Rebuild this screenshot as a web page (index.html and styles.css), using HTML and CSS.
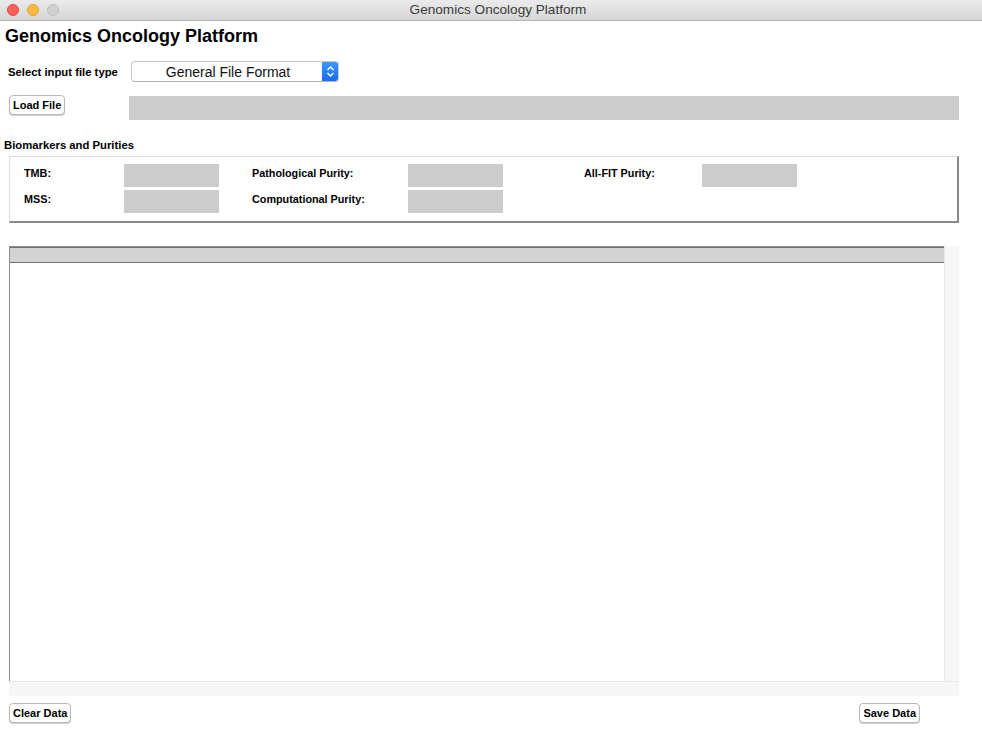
FILE: index.html
```html
<!DOCTYPE html>
<html>
<head>
<meta charset="utf-8">
<link rel="stylesheet" href="styles.css">
</head>
<body>
<div class="titlebar">
  <div class="lights">
    <span class="light red"></span>
    <span class="light yellow"></span>
    <span class="light gray"></span>
  </div>
  <div class="wintitle">Genomics Oncology Platform</div>
</div>
<div class="app">
  <h1 class="heading">Genomics Oncology Platform</h1>
  <div class="row-select">
    <span class="label">Select input file type</span>
    <div class="select">
      <span class="select-text">General File Format</span>
      <span class="stepper">
        <svg width="9" height="13" viewBox="0 0 9 13"><path d="M1.5 5 L4.5 2 L7.5 5 M1.5 8 L4.5 11 L7.5 8" fill="none" stroke="#fff" stroke-width="1.4"/></svg>
      </span>
    </div>
  </div>
  <div class="row-load">
    <button class="btn">Load File</button>
    <div class="field path"></div>
  </div>
  <div class="section-title">Biomarkers and Purities</div>
  <div class="panel">
    <div class="col c1">
      <div class="pair"><span class="plabel">TMB:</span><div class="field box"></div></div>
      <div class="pair"><span class="plabel">MSS:</span><div class="field box"></div></div>
    </div>
    <div class="col c2">
      <div class="pair"><span class="plabel">Pathological Purity:</span><div class="field box"></div></div>
      <div class="pair"><span class="plabel">Computational Purity:</span><div class="field box"></div></div>
    </div>
    <div class="col c3">
      <div class="pair"><span class="plabel">All-FIT Purity:</span><div class="field box"></div></div>
    </div>
  </div>
  <div class="table-wrap">
    <div class="table-main">
      <div class="table">
        <div class="thead"></div>
      </div>
      <div class="vscroll"></div>
    </div>
    <div class="hscroll"></div>
  </div>
  <div class="bottom">
    <button class="btn">Clear Data</button>
    <button class="btn save">Save Data</button>
  </div>
</div>
</body>
</html>
```
FILE: styles.css
```css
html, body {
  margin: 0;
  padding: 0;
  background: #ffffff;
  font-family: "Liberation Sans", Arial, sans-serif;
  width: 982px;
  height: 735px;
  overflow: hidden;
}
.titlebar {
  height: 21px;
  box-sizing: border-box;
  background: linear-gradient(#ebebeb, #d6d6d6);
  border-bottom: 1px solid #b4b4b4;
  display: flex;
  align-items: center;
  position: relative;
}
.lights {
  display: flex;
  gap: 8px;
  padding-left: 7px;
}
.light {
  width: 12px;
  height: 12px;
  border-radius: 50%;
  box-sizing: border-box;
}
.red { background: #fc605c; border: 1px solid #de4a45; }
.yellow { background: #fdbc40; border: 1px solid #de9f34; }
.gray { background: #d0d0d0; border: 1px solid #bdbdbd; }
.wintitle {
  position: absolute;
  left: 14px;
  right: 0;
  top: 0;
  height: 20px;
  line-height: 20px;
  text-align: center;
  font-size: 13.6px;
  color: #3a3a3a;
  font-family: "Liberation Sans", Arial, sans-serif;
}
.app {
  display: flex;
  flex-direction: column;
}
.heading {
  margin: 5px 0 0 5px;
  font-size: 18px;
  font-weight: bold;
  line-height: 20px;
  color: #000;
}
.row-select {
  display: flex;
  align-items: center;
  margin-top: 15px;
  padding-left: 8px;
}
.label {
  font-size: 11.3px;
  font-weight: bold;
  width: 123px;
  color: #000;
}
.select {
  width: 208px;
  height: 21px;
  box-sizing: border-box;
  border: 1px solid #c8c8c8;
  border-bottom-color: #b0b0b0;
  border-radius: 4px;
  display: flex;
  align-items: center;
  overflow: hidden;
  background: #fff;
}
.select-text {
  flex: 1;
  text-align: center;
  font-size: 14px;
  color: #111;
  padding-left: 2px;
}
.stepper {
  width: 17px;
  height: 21px;
  background: linear-gradient(#3f9bfd, #1667f0);
  display: flex;
  align-items: center;
  justify-content: center;
  margin-right: -1px;
}
.row-load {
  display: flex;
  align-items: flex-start;
  margin-top: 13px;
  padding-left: 9px;
}
.btn {
  font-family: "Liberation Sans", Arial, sans-serif;
  font-size: 11px;
  font-weight: bold;
  color: #000;
  background: #fff;
  border: 1px solid #b8b8b8;
  border-radius: 4px;
  height: 20px;
  padding: 0 3px;
  margin: 0;
  box-shadow: 0 1px 0 #d0d0d0;
}
.field {
  background: #cccccc;
}
.path {
  margin-left: 64px;
  width: 830px;
  height: 24px;
  margin-top: 1px;
}
.section-title {
  margin: 18px 0 0 4px;
  font-size: 11.3px;
  font-weight: bold;
  line-height: 14px;
  color: #000;
}
.panel {
  margin: 4px 0 0 9px;
  width: 950px;
  height: 67px;
  box-sizing: border-box;
  border-top: 1px solid #dddddd;
  border-left: 1px solid #dddddd;
  border-right: 2px solid #8a8a8a;
  border-bottom: 2px solid #8a8a8a;
  display: flex;
  padding: 7px 0 0 14px;
}
.col {
  display: flex;
  flex-direction: column;
  gap: 3px;
}
.c1 { width: 228px; }
.c2 { width: 332px; }
.pair {
  display: flex;
  align-items: flex-start;
  height: 23px;
}
.plabel {
  font-size: 10.8px;
  font-weight: bold;
  color: #000;
  line-height: 13px;
  padding-top: 3px;
}
.c1 .plabel { width: 100px; }
.c2 .plabel { width: 156px; }
.c3 .plabel { width: 118px; }
.box {
  width: 95px;
  height: 23px;
}
.table-wrap {
  margin: 23px 0 0 9px;
  width: 950px;
  display: flex;
  flex-direction: column;
}
.table-main {
  display: flex;
  height: 435px;
}
.table {
  width: 935px;
  box-sizing: border-box;
  border-top: 1px solid #8c8c8c;
  border-left: 1px solid #8c8c8c;
  background: #fff;
}
.thead {
  height: 14px;
  background: #d3d3d3;
  border-top: 1px solid #707070;
  border-bottom: 1px solid #707070;
}
.vscroll {
  width: 14px;
  background: #f7f7f7;
  border-left: 1px solid #e6e6e6;
}
.hscroll {
  height: 14px;
  background: #f6f6f6;
  border-top: 1px solid #e8e8e8;
}
.bottom {
  display: flex;
  justify-content: space-between;
  margin-top: 7px;
  padding: 0 62px 0 9px;
}
```
